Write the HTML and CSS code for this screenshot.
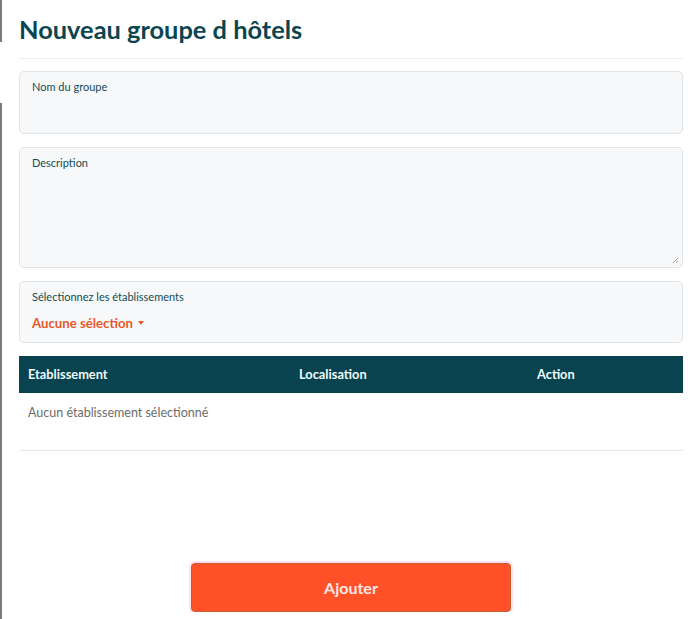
FILE: index.html
```html
<!DOCTYPE html>
<html lang="fr">
<head>
    <meta charset="UTF-8">
    <meta name="viewport" content="width=device-width, initial-scale=1.0">
    <title>Nouveau groupe d hôtels</title>
    <link rel="stylesheet" href="styles.css">
</head>
<body>
    <div class="edge"></div>

    <main class="page">
        <h1 class="title">Nouveau groupe d hôtels</h1>

        <form class="group-form">
            <div class="field field-name">
                <label>Nom du groupe</label>
            </div>

            <div class="field field-desc">
                <label>Description</label>
                <svg class="grip" width="7" height="7" viewBox="0 0 7 7">
                    <path d="M6 1 L1 6 M6 4 L4 6" stroke="#9a9a9a" stroke-width="1" fill="none"/>
                </svg>
            </div>

            <div class="field field-select">
                <label>Sélectionnez les établissements</label>
                <span class="picker">Aucune sélection <span class="caret"></span></span>
            </div>

            <!-- Selected hotels -->
            <div class="table">
                <div class="table-head">
                    <span>Etablissement</span>
                    <span>Localisation</span>
                    <span>Action</span>
                </div>
                <div class="table-empty">Aucun établissement sélectionné</div>
            </div>

            <div class="actions">
                <button type="button" class="btn-add">Ajouter</button>
            </div>
        </form>
    </main>
</body>
</html>
```

FILE: styles.css
```css
* {
    margin: 0;
    padding: 0;
    box-sizing: border-box;
}

body {
    font-family: 'Lato', 'Liberation Sans', sans-serif;
    background: #fff;
    color: #0b4650;
    overflow: hidden;
}

/* left border of the underlying panel */
.edge {
    position: fixed;
    top: 0;
    left: 0;
    width: 2px;
    height: 100%;
    background: linear-gradient(#7a7a7a 0 42px, transparent 42px 103px, #7a7a7a 103px);
}

.page {
    padding: 13px 5px 0 19px;
}

.title {
    font-size: 25.4px;
    font-weight: 700;
    color: #0b4650;
    line-height: 32px;
    padding-bottom: 13px;
    border-bottom: 1px solid #eceeef;
}

.group-form {
    display: flex;
    flex-direction: column;
    padding-top: 12px;
}

.field {
    position: relative;
    background: #f7f8fa;
    border: 1px solid #e1e4e7;
    border-radius: 5px;
    padding: 8px 12px;
    margin-bottom: 13px;
}

.field label {
    display: block;
    font-size: 11px;
    line-height: 13px;
    color: #134c52;
}

.field-name {
    height: 63px;
}

.field-desc {
    height: 121px;
}

.grip {
    position: absolute;
    right: 3px;
    bottom: 3px;
}

.field-select {
    height: 62px;
}

.picker {
    display: inline-flex;
    align-items: center;
    margin-top: 12px;
    font-size: 13.2px;
    font-weight: 700;
    color: #e8582a;
}

.caret {
    display: inline-block;
    margin-left: 5px;
    border-left: 3px solid transparent;
    border-right: 3px solid transparent;
    border-top: 4px solid #e8582a;
}

.table {
    border-bottom: 1px solid #e6e8ea;
}

.table-head {
    display: grid;
    grid-template-columns: 271px 238px 1fr;
    height: 37px;
    align-items: center;
    padding-left: 9px;
    padding-bottom: 1px;
    background: #09434f;
    color: #effcfc;
    font-size: 12.8px;
    font-weight: 700;
}

.table-empty {
    height: 57px;
    padding: 12px 9px 0;
    font-size: 12.5px;
    color: #6b6b6b;
}

.actions {
    display: flex;
    justify-content: center;
    padding-top: 112px;
}

.btn-add {
    width: 320px;
    height: 49px;
    padding-bottom: 1px;
    background: #ff5028;
    border: 1px solid #c8602e;
    border-radius: 4px;
    box-shadow: 0 0 0 2px #fde0f3;
    font-family: inherit;
    font-size: 16px;
    font-weight: 700;
    color: #fde6e6;
}
```
